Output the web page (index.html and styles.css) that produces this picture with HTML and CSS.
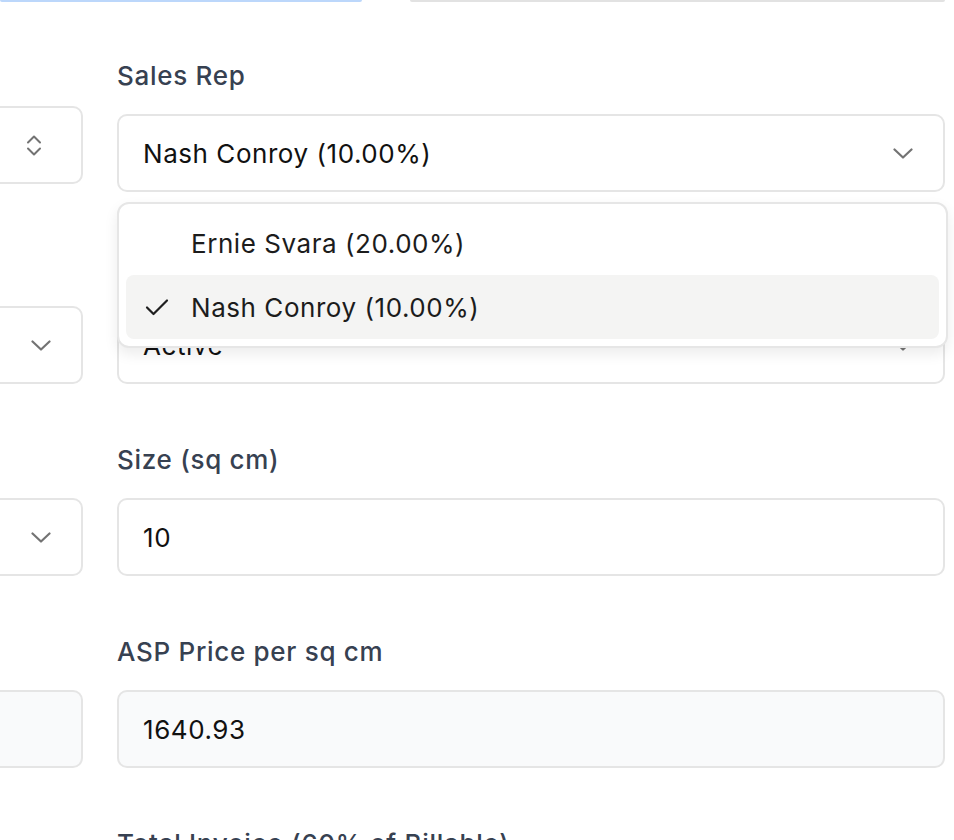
FILE: index.html
```html
<!DOCTYPE html>
<html lang="en">
<head>
<meta charset="utf-8">
<title>Form</title>
<link rel="stylesheet" href="styles.css">
</head>
<body>
<div class="page">
  <div class="prev-row">
    <div class="prev-edge prev-edge--focused"></div>
    <div class="prev-edge prev-edge--plain"></div>
  </div>

  <div class="form">
    <!-- row 1 -->
    <div class="field">
      <div class="label label--empty"></div>
      <div class="control control--raised control--stepper">
        <span class="value"></span>
        <svg class="icon-updown" width="16" height="23" viewBox="0 0 16 23" fill="none" stroke="#737373" stroke-width="2" stroke-linecap="round" stroke-linejoin="round"><path d="M2 8.5 8 2.5l6 6"/><path d="M2 14.5l6 6 6-6"/></svg>
      </div>
    </div>
    <div class="field">
      <label class="label">Sales Rep</label>
      <div class="select">
        <div class="control">
          <span class="value">Nash Conroy (10.00%)</span>
          <svg class="icon-chevron" width="20" height="11" viewBox="0 0 20 11" fill="none" stroke="#737373" stroke-width="2.2" stroke-linecap="round" stroke-linejoin="round"><path d="M1.5 1.5 10 9.5l8.5-8"/></svg>
        </div>
        <ul class="menu">
          <li class="menu-item">
            <span class="menu-check"></span>
            <span>Ernie Svara (20.00%)</span>
          </li>
          <li class="menu-item menu-item--selected">
            <span class="menu-check"><svg width="24" height="18" viewBox="0 0 24 18" fill="none" stroke="#1f1f1f" stroke-width="2.2" stroke-linecap="round" stroke-linejoin="round"><path d="M2 9.5 8.5 16 22 2.5"/></svg></span>
            <span>Nash Conroy (10.00%)</span>
          </li>
        </ul>
      </div>
    </div>

    <!-- row 2 -->
    <div class="field">
      <div class="label label--empty"></div>
      <div class="control">
        <span class="value"></span>
        <svg class="icon-chevron" width="20" height="11" viewBox="0 0 20 11" fill="none" stroke="#737373" stroke-width="2.2" stroke-linecap="round" stroke-linejoin="round"><path d="M1.5 1.5 10 9.5l8.5-8"/></svg>
      </div>
    </div>
    <div class="field">
      <label class="label">Status</label>
      <div class="control">
        <span class="value">Active</span>
        <svg class="icon-chevron" width="20" height="11" viewBox="0 0 20 11" fill="none" stroke="#737373" stroke-width="2.2" stroke-linecap="round" stroke-linejoin="round"><path d="M1.5 1.5 10 9.5l8.5-8"/></svg>
      </div>
    </div>

    <!-- row 3 -->
    <div class="field">
      <div class="label label--empty"></div>
      <div class="control">
        <span class="value"></span>
        <svg class="icon-chevron" width="20" height="11" viewBox="0 0 20 11" fill="none" stroke="#737373" stroke-width="2.2" stroke-linecap="round" stroke-linejoin="round"><path d="M1.5 1.5 10 9.5l8.5-8"/></svg>
      </div>
    </div>
    <div class="field">
      <label class="label">Size (sq cm)</label>
      <div class="control">
        <span class="value">10</span>
      </div>
    </div>

    <!-- row 4 -->
    <div class="field">
      <div class="label label--empty"></div>
      <div class="control control--readonly"></div>
    </div>
    <div class="field">
      <label class="label">ASP Price per sq cm</label>
      <div class="control control--readonly">
        <span class="value">1640.93</span>
      </div>
    </div>

    <!-- row 5 -->
    <div class="field">
      <div class="label label--empty"></div>
      <div class="control control--readonly"></div>
    </div>
    <div class="field">
      <label class="label">Total Invoice (60% of Billable)</label>
      <div class="control control--readonly"></div>
    </div>
  </div>
</div>
</body>
</html>
```

FILE: styles.css
```css
* { box-sizing: border-box; }

html, body {
  margin: 0;
  padding: 0;
  background: #ffffff;
}

body {
  font-family: Inter, "Noto Sans", "Liberation Sans", sans-serif;
  color: #111111;
  overflow: hidden;
  width: 954px;
  height: 840px;
}

.page {
  width: 954px;
}

.prev-row {
  display: flex;
  height: 2px;
}

.prev-edge {
  height: 2px;
  border-radius: 0 0 2px 2px;
}

.prev-edge--focused {
  width: 362px;
  background: #bcd7fb;
}

.prev-edge--plain {
  width: 535px;
  margin-left: 48px;
  background: #e2e2e2;
}

.form {
  display: grid;
  grid-template-columns: 400px 828px;
  column-gap: 34px;
  row-gap: 60px;
  margin-left: -317px;
  padding-top: 58px;
}

.field {
  display: flex;
  flex-direction: column;
}

.label {
  display: block;
  font-size: 26px;
  font-weight: 500;
  letter-spacing: 0.7px;
  line-height: 32px;
  height: 32px;
  color: #374151;
  margin-bottom: 22px;
  white-space: nowrap;
}

.select {
  position: relative;
}

.control {
  height: 78px;
  border: 2px solid #e5e5e5;
  border-radius: 10px;
  padding: 0 30px 0 24px;
  display: flex;
  align-items: center;
  justify-content: space-between;
  font-size: 26px;
  letter-spacing: 0.55px;
  background: #ffffff;
}

.control--raised {
  margin-top: -8px;
  margin-bottom: 8px;
}

.control--stepper {
  padding-right: 39px;
}

.control--readonly {
  background: #f9fafb;
}

.value {
  white-space: nowrap;
}

.icon-chevron,
.icon-updown {
  flex: none;
  display: block;
}

.menu {
  position: absolute;
  top: calc(100% + 10px);
  left: 0;
  right: -3px;
  margin: 0;
  padding: 7px;
  list-style: none;
  background: #ffffff;
  border: 2px solid #e6e6e6;
  border-radius: 12px;
  box-shadow: 0 6px 14px rgba(0, 0, 0, 0.08);
  z-index: 10;
}

.menu-item {
  height: 64px;
  display: flex;
  align-items: center;
  padding-left: 19px;
  border-radius: 8px;
  font-size: 26px;
  letter-spacing: 0.55px;
  color: #1c1c1c;
}

.menu-item--selected {
  background: #f4f4f3;
}

.menu-check {
  width: 24px;
  height: 18px;
  margin-right: 22px;
  display: flex;
  align-items: center;
}

.menu-check svg {
  display: block;
}
```
